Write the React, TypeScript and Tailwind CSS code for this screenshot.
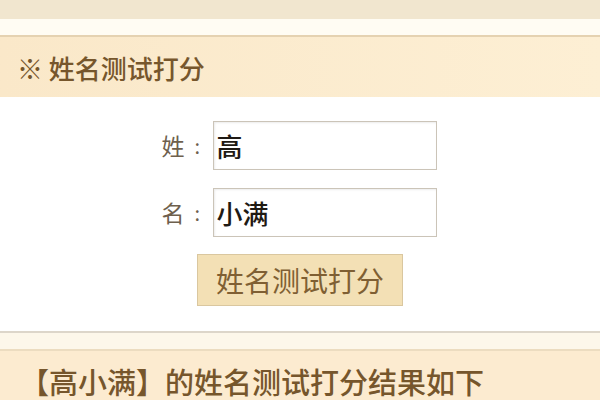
export default function App() {
  const font = "font-['Noto_Sans_CJK_SC','Noto_Sans',sans-serif]";

  const Field = ({ label, value }: { label: string; value: string }) => (
    <div className="flex items-center">
      <div className="flex w-[51px] items-center text-[23px] leading-none text-[#6e604d]">
        <span>{label}</span>
        <span className="ml-[10px] text-[20px]">:</span>
      </div>
      <input
        readOnly
        value={value}
        className={`h-[49px] w-[224px] border border-[#cbc4b8] bg-white pl-[3px] text-[26px] font-medium text-[#1f1a14] shadow-[inset_1px_1px_2px_rgba(0,0,0,0.08)] outline-none ${font}`}
      />
    </div>
  );

  return (
    <div className={`flex h-[400px] w-[600px] flex-col overflow-hidden bg-white ${font}`}>
      <div className="h-[19px] bg-[#f1e6cf]" />
      <div className="h-[16px] bg-[#fffcf3]" />
      <div className="h-[2px] bg-[#e5d2b1]" />
      <div className="flex h-[60px] items-center bg-gradient-to-r from-[#fae8c9] to-[#fdefd4] pl-[17px] text-[26px] font-medium text-[#76562c]">
        ※ 姓名测试打分
      </div>

      <div className="flex h-[234px] flex-col items-center gap-[18px] bg-white pt-[24px]">
        <div className="flex flex-col gap-[18px] pr-[2px]">
          <Field label="姓" value="高" />
          <Field label="名" value="小满" />
        </div>
        <button className="-mt-[1px] h-[52px] w-[206px] border border-[#dac79f] bg-[#f3e0b5] text-[28px] text-[#7f5f33]">
          姓名测试打分
        </button>
      </div>

      <div className="h-[2px] bg-[#ddd6ca]" />
      <div className="h-[16px] bg-[#fdf7ea]" />
      <div className="h-[2px] bg-[#ecdcc0]" />
      <div className="flex-1 bg-[#fcebd0] pl-[20px] pt-[11px] text-[29px] font-medium leading-[38px] text-[#76562c]">
        【高小满】的姓名测试打分结果如下
      </div>
    </div>
  );
}
